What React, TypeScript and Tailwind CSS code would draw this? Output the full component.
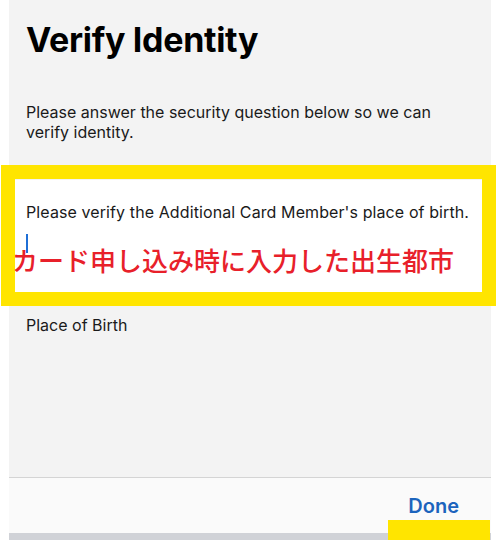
export default function App() {
  return (
    <div className="relative h-[540px] w-[496px] overflow-hidden bg-white font-['Inter','Noto_Sans_CJK_JP',sans-serif] text-black">
      <div className="ml-[9px] mr-[5px] flex h-[540px] flex-col">
        {/* form panel */}
        <div className="flex h-[477px] flex-col bg-[#f3f3f3]">
          <h1 className="pl-[17px] pt-[20px] text-[34px] leading-[40px] font-bold tracking-[-0.3px]">
            Verify Identity
          </h1>
          <p className="mt-[42px] pl-[17px] pr-[40px] text-[16px] leading-[20px] text-[#1a1a1a]">
            Please answer the security question below so we can verify identity.
          </p>
          <div className="mt-[38px] flex h-[122px] flex-col bg-white pl-[17px]">
            <p className="mt-[22px] text-[16px] tracking-[0.1px] leading-[20px] text-[#1a1a1a]">
              Please verify the Additional Card Member's place of birth.
            </p>
            <span className="mt-[12px] h-[19px] w-[2px] bg-[#1f6fd6]" />
          </div>
          <p className="mt-[13px] pl-[17px] text-[16px] leading-[20px] text-[#1a1a1a]">Place of Birth</p>
        </div>

        {/* keyboard accessory bar */}
        <div className="flex h-[56px] items-center justify-end border-t border-[#d4d4d4] bg-[#fafafa] pr-[32px]">
          <button type="button" className="text-[20px] font-semibold leading-[24px] text-[#1c64bd]">
            Done
          </button>
        </div>
        <div className="flex-1 bg-[#d0d2d7]" />
      </div>

      {/* annotation overlay */}
      <div className="absolute left-[1px] top-[165px] h-[141px] w-[495px] border-[14px] border-[#ffe500]" />
      <div className="absolute left-[12px] top-[243px] whitespace-nowrap font-['Noto_Sans_CJK_JP',sans-serif] text-[26px] leading-[34px] font-medium text-[#e8202a]">
        カード申し込み時に入力した出生都市
      </div>
      <div className="absolute left-[388px] top-[520px] h-[20px] w-[102px] bg-[#ffe500]" />
    </div>
  );
}
